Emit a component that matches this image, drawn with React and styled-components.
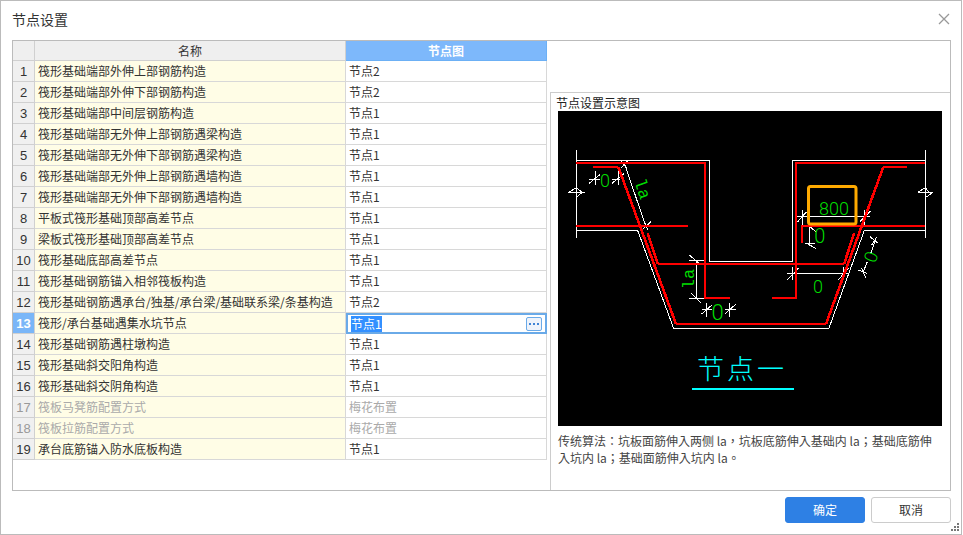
import React from 'react'
import styled, { createGlobalStyle } from 'styled-components'

const rows = [
  ['筏形基础端部外伸上部钢筋构造', '节点2'],
  ['筏形基础端部外伸下部钢筋构造', '节点2'],
  ['筏形基础端部中间层钢筋构造', '节点1'],
  ['筏形基础端部无外伸上部钢筋遇梁构造', '节点1'],
  ['筏形基础端部无外伸下部钢筋遇梁构造', '节点1'],
  ['筏形基础端部无外伸上部钢筋遇墙构造', '节点1'],
  ['筏形基础端部无外伸下部钢筋遇墙构造', '节点1'],
  ['平板式筏形基础顶部高差节点', '节点1'],
  ['梁板式筏形基础顶部高差节点', '节点1'],
  ['筏形基础底部高差节点', '节点1'],
  ['筏形基础钢筋锚入相邻筏板构造', '节点1'],
  ['筏形基础钢筋遇承台/独基/承台梁/基础联系梁/条基构造', '节点2'],
  ['筏形/承台基础遇集水坑节点', '节点1'],
  ['筏形基础钢筋遇柱墩构造', '节点1'],
  ['筏形基础斜交阳角构造', '节点1'],
  ['筏形基础斜交阴角构造', '节点1'],
  ['筏板马凳筋配置方式', '梅花布置', true],
  ['筏板拉筋配置方式', '梅花布置', true],
  ['承台底筋锚入防水底板构造', '节点1'],
]

const SELECTED = 12

const GlobalStyle = createGlobalStyle`
  html, body { margin: 0; padding: 0; background: #fff; }
  * { box-sizing: border-box; }
`

const Dialog = styled.div`
  position: relative;
  width: 962px;
  height: 535px;
  background: #fff;
  border: 1px solid #bbb;
  display: flex;
  flex-direction: column;
  font-family: "Noto Sans CJK SC", "Liberation Sans", sans-serif;
  font-size: 12px;
  color: #333;
  overflow: hidden;
`
const TitleBar = styled.div`
  height: 39px;
  flex: none;
  padding: 0 11px 4px 11px;
  display: flex;
  align-items: center;
  justify-content: space-between;
  font-size: 14px;
`
const CloseButton = styled.svg`
  width: 12px;
  height: 12px;
  display: block;
`
const Frame = styled.div`
  flex: none;
  width: 939px;
  height: 451px;
  margin-left: 11px;
  border: 1px solid #bbb;
  display: flex;
`
const Grid = styled.div`
  width: 534px;
  flex: none;
`
const Row = styled.div`
  display: grid;
  grid-template-columns: 22px 311px 201px;
  height: ${p => (p.$header ? '20px' : '21px')};
`
const HeadCell = styled.div`
  display: flex;
  align-items: center;
  justify-content: center;
  padding-bottom: 1px;
  background: ${p => (p.$active ? '#7db8fb' : '#efefef')};
  color: ${p => (p.$active ? '#fff' : '#333')};
  font-weight: ${p => (p.$active ? 700 : 400)};
  border-right: 1px solid ${p => (p.$active ? '#6cb0f5' : '#d0d0d0')};
  border-bottom: 1px solid ${p => (p.$active ? '#6cb0f5' : '#d0d0d0')};
`
const IndexCell = styled.div`
  display: flex;
  align-items: center;
  justify-content: center;
  font-family: "Liberation Sans", sans-serif;
  font-size: 13px;
  font-weight: ${p => (p.$selected ? 700 : 400)};
  background: ${p => (p.$selected ? '#7ab6f8' : '#f0f0f0')};
  color: ${p => (p.$selected ? '#fff' : p.$muted ? '#999' : '#333')};
  border-right: 1px solid #d0d0d0;
  border-bottom: 1px solid #d0d0d0;
`
const NameCell = styled.div`
  display: flex;
  align-items: center;
  padding: 0 0 1px 3px;
  white-space: nowrap;
  background: #fffde6;
  color: ${p => (p.$muted ? '#aaa' : '#333')};
  border-right: 1px solid #d8d8d8;
  border-bottom: 1px solid #d8d8d8;
`
const ValueCell = styled.div`
  display: flex;
  align-items: center;
  padding: 0 0 1px 3px;
  background: #fff;
  color: ${p => (p.$muted ? '#aaa' : '#333')};
  border-right: 1px solid #d8d8d8;
  border-bottom: 1px solid #d8d8d8;
`
const EditCell = styled.div`
  display: flex;
  align-items: center;
  justify-content: space-between;
  padding: 0 3px;
  border: 2px solid #6aaae8;
  background: #fff;
`
const SelectedText = styled.span`
  background: #3390ff;
  color: #fff;
  height: 16px;
  line-height: 16px;
`
const MoreButton = styled.span`
  width: 16px;
  height: 14px;
  border: 1px solid #6aaae8;
  border-radius: 2px;
  background: #eef3fb;
  display: flex;
  align-items: center;
  justify-content: center;
  gap: 2px;
`
const Dot = styled.i`
  width: 2px;
  height: 2px;
  background: #3f84d6;
`
const SidePane = styled.div`
  flex: 1;
  min-width: 0;
  padding: 51px 0 0 3px;
`
const Panel = styled.div`
  height: 100%;
  border-top: 1px solid #ccc;
  border-left: 1px solid #ccc;
`
const PanelTitle = styled.div`
  height: 18px;
  line-height: 19px;
  padding-left: 5px;
  color: #222;
`
const Drawing = styled.svg`
  display: block;
  width: 384px;
  height: 315px;
  margin-left: 7px;
  background: #000;
`
const Note = styled.div`
  width: 384px;
  margin: 6px 0 0 7px;
  line-height: 17px;
  color: #444;
  font-family: "Noto Sans CJK TC", "Noto Sans CJK SC", sans-serif;
`
const Footer = styled.div`
  flex: none;
  display: flex;
  justify-content: flex-end;
  gap: 6px;
  margin-top: 6px;
  padding-right: 10px;
`
const Button = styled.button`
  width: 80px;
  height: 26px;
  padding: 0 0 1px;
  font: inherit;
  border-radius: 3px;
  border: 1px solid ${p => (p.$primary ? '#2e80e4' : '#ccc')};
  background: ${p => (p.$primary ? '#2e80e4' : '#fff')};
  color: ${p => (p.$primary ? '#fff' : '#333')};
`
const Grip = styled.svg`
  position: absolute;
  right: 2px;
  bottom: 3px;
  width: 8px;
  height: 8px;
`

const whiteLines = [
  'M576.5 150V238',
  'M576 160.5H709.5V261H792.5V160.5H925',
  'M925.5 150V238',
  'M576 230H637.5L673.5 328H829L864.5 230H925',
  'M624.3 163.3L646 226.7',
  // zigzag breaks
  'M568.5 192.5H584.5M568.5 192.5L576.5 187.5L582 192.5M576.5 197L582 192.5',
  'M917.7 192.5H932.7M917.7 192.5L925.5 187.5L929 192.5M926.5 197L932.7 192.5',
  // ticks of the top slant
  'M621 168L627.7 160.7M621 161L627 168',
  'M642 230L651 221.7M644.5 222L648 230',
  // left 0
  'M595 170.7V185M589.3 183.3L600.3 174.3M589 179.5H600',
  'M618.5 170.7V185M612 183.3L624.3 173.3M612 179.5H620',
  // la on the pit wall
  'M689.3 260.5H704.3M689.3 255L701 265M696.5 260.5V298.5M689.3 298.5H704.3M691 293.3L701 302.7',
  // bottom 0
  'M706 302.7V316.7M701.7 314L712 305M701.7 309.5H712',
  'M729.5 302.7V316.7M725 314L736 304M725 309.5H736',
  // 800
  'M797.3 216.5H870M802.5 210V225M797.7 221.7L806.7 211.7M864.5 210V225M860 221.7L870.7 211',
  // small 0
  'M809.5 225V243.5M805 243.5H815M806.7 243.5L815.7 248.3M810 226.7L815.7 231.7',
  // lower 0
  'M787.3 273.5H848.3M792.5 266.7V280M787.3 280L798.3 268.3M843.5 266.7V280M838.3 280L848.3 268.3',
  // right slanted 0
  'M875 241.7L870.7 253.3M867.3 261.7L863.3 271.7M870 236.7L878.3 243.3M871.7 245L877 236.7M858.3 270L866.7 273.3M861.7 268.3L866 278.3',
]

const redBars = [
  'M576 163H705V298H729.5',
  'M592.7 167H618.3',
  'M676 324H826',
  'M883.3 167H907.3',
  'M576 226H687.7',
  'M657.7 263.5H844.3',
  'M925 163H796V298H771.7',
  'M801.7 243V226H925',
]

const redSlants = [
  'M618.3 167L676 324',
  'M826 324L883.3 167',
  'M647.7 233.3L657.7 263.5',
  'M844.3 263.5L854 233.3',
]

const greenText = [
  { x: 605, y: 187, size: 18, text: '0' },
  { x: 717.7, y: 320, size: 22, text: '0' },
  { x: 819.7, y: 242.5, size: 20, text: '0' },
  { x: 818, y: 293, size: 18, text: '0' },
  { x: 834, y: 215, size: 18, text: '800' },
  { x: 871.3, y: 257, size: 18, text: '0', rotate: -70, dy: 6 },
  { x: 642, y: 189, size: 17, text: 'la', rotate: 71, dy: 5, mono: true },
  { x: 688.7, y: 279, size: 17, text: 'la', rotate: -90, dy: 5, mono: true },
]

function NodeDrawing() {
  return (
    <Drawing viewBox="558 111 384 315">
      <g fill="none" stroke="#fff" strokeWidth="1" shapeRendering="crispEdges">
        {whiteLines.map((d, i) => <path key={i} d={d} />)}
      </g>
      <g fill="none" stroke="#f00" strokeWidth="2" shapeRendering="crispEdges">
        {redBars.map((d, i) => <path key={i} d={d} />)}
      </g>
      <g fill="none" stroke="#f00" strokeWidth="2.6" shapeRendering="crispEdges">
        {redSlants.map((d, i) => <path key={i} d={d} />)}
      </g>
      <rect x="808.5" y="186.5" width="47.5" height="37.5" rx="2" fill="none" stroke="#fa0" strokeWidth="3" />
      <g fill="#0d0" textAnchor="middle" fontWeight="300">
        {greenText.map((t, i) => (
          <text
            key={i}
            x={t.x}
            y={t.dy ? t.y + t.dy : t.y}
            fontSize={t.size}
            fontFamily={t.mono ? '"Liberation Mono", monospace' : 'Roboto, sans-serif'}
            transform={t.rotate ? `rotate(${t.rotate} ${t.x} ${t.y})` : undefined}
          >
            {t.text}
          </text>
        ))}
      </g>
      <text x="742" y="379" fill="#0ff" fontSize="27" letterSpacing="3" textAnchor="middle" fontFamily='"Noto Sans CJK SC", sans-serif' fontWeight="300">
        节点一
      </text>
      <path d="M692 389H794" stroke="#0ff" strokeWidth="2" />
    </Drawing>
  )
}

function App() {
  return (
    <Dialog>
      <GlobalStyle />
      <TitleBar>
        <span>节点设置</span>
        <CloseButton viewBox="0 0 12 12">
          <path d="M1 1L11 11M11 1L1 11" stroke="#999" strokeWidth="1.3" fill="none" />
        </CloseButton>
      </TitleBar>
      <Frame>
        <Grid>
          <Row $header>
            <HeadCell />
            <HeadCell>名称</HeadCell>
            <HeadCell $active>节点图</HeadCell>
          </Row>
          {rows.map(([name, value, muted], i) => (
            <Row key={name}>
              <IndexCell $selected={i === SELECTED} $muted={muted}>{i + 1}</IndexCell>
              <NameCell $muted={muted}>{name}</NameCell>
              {i === SELECTED ? (
                <EditCell>
                  <SelectedText>{value}</SelectedText>
                  <MoreButton><Dot /><Dot /><Dot /></MoreButton>
                </EditCell>
              ) : (
                <ValueCell $muted={muted}>{value}</ValueCell>
              )}
            </Row>
          ))}
        </Grid>
        <SidePane>
          <Panel>
            <PanelTitle>节点设置示意图</PanelTitle>
            <NodeDrawing />
            <Note>传统算法：坑板面筋伸入两侧 la，坑板底筋伸入基础内 la；基础底筋伸入坑内 la；基础面筋伸入坑内 la。</Note>
          </Panel>
        </SidePane>
      </Frame>
      <Footer>
        <Button $primary>确定</Button>
        <Button>取消</Button>
      </Footer>
      <Grip viewBox="0 0 8 8">
        <path d="M6 0h2v2H6zM3 3h2v2H3zM6 3h2v2H6zM0 6h2v2H0zM3 6h2v2H3zM6 6h2v2H6z" fill="#777" />
      </Grip>
    </Dialog>
  )
}

export default App
